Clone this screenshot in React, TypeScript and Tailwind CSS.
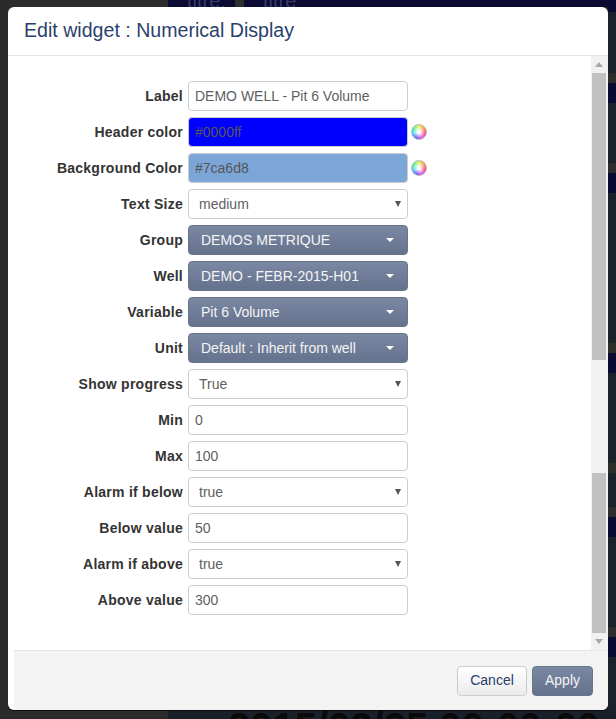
const segments: [string, string][] = [
  ['h-[5px]', 'bg-[#0a0a32]'],
  ['h-[61px]', 'bg-[#1c222a]'],
  ['h-[10px]', 'bg-[#2e2e2c]'],
  ['h-[20px]', 'bg-[#0a0a32]'],
  ['h-[60px]', 'bg-[#1c222a]'],
  ['h-[10px]', 'bg-[#2e2e2c]'],
  ['h-[20px]', 'bg-[#0a0a32]'],
  ['h-[150px]', 'bg-[#1c222a]'],
  ['h-[10px]', 'bg-[#2e2e2c]'],
  ['h-[20px]', 'bg-[#0a0a32]'],
  ['h-[90px]', 'bg-[#1c222a]'],
  ['h-[10px]', 'bg-[#2e2e2c]'],
  ['h-[34px]', 'bg-[#1c222a]'],
  ['h-[10px]', 'bg-[#2e2e2c]'],
  ['h-[20px]', 'bg-[#0a0a32]'],
  ['h-[90px]', 'bg-[#1c222a]'],
  ['h-[10px]', 'bg-[#2e2e2c]'],
  ['h-[20px]', 'bg-[#0a0a32]'],
  ['h-[53px]', 'bg-[#1c222a]'],
]

function Row({ label, children }: { label: string; children: React.ReactNode }) {
  return (
    <div className="flex h-[30px] items-center">
      <label className="w-[175px] pt-px text-right text-[14px] font-bold tracking-[0.25px] text-[#333]">{label}</label>
      <div className="ml-[5px] flex items-center">{children}</div>
    </div>
  )
}

function TextField({ value }: { value: string }) {
  return (
    <input
      readOnly
      value={value}
      className="h-[30px] w-[220px] rounded border border-[#ccc] bg-white px-[6px] text-[14px] text-[#5f5f5f] outline-none"
    />
  )
}

function ColorField({ value, bg }: { value: string; bg: string }) {
  return (
    <>
      <input
        readOnly
        value={value}
        className={`h-[30px] w-[220px] rounded border border-[#ccc] px-[6px] text-[14px] text-[#555] outline-none ${bg}`}
      />
      <span className="ml-[3px] h-[16px] w-[16px] rounded-full border border-[#bbb] bg-[radial-gradient(circle,#fff_12%,#ffffff00_72%),conic-gradient(#d8f040,#ff8a30,#ff3070,#e040f0,#5050ff,#30d0f0,#40f080,#d8f040)]" />
    </>
  )
}

function NativeSelect({ value }: { value: string }) {
  return (
    <div className="relative">
      <select
        defaultValue={value}
        className="block h-[30px] w-[220px] appearance-none rounded border border-[#ccc] bg-white pl-[10px] text-[14px] text-[#5f5f5f] outline-none"
      >
        <option>{value}</option>
      </select>
      <span className="absolute right-[7px] top-[12px] h-0 w-0 border-x-[3.5px] border-t-[6px] border-x-transparent border-t-[#555]" />
    </div>
  )
}

function DropButton({ value }: { value: string }) {
  return (
    <button className="flex h-[30px] w-[220px] items-center justify-between rounded border border-[#68758f] bg-gradient-to-b from-[#7b88a4] to-[#65728e] pl-3 pr-[13px] text-[14px] text-[#f4f4f4]">
      <span>{value}</span>
      <span className="h-0 w-0 border-x-4 border-t-4 border-x-transparent border-t-white" />
    </button>
  )
}

export default function App() {
  return (
    <div className="relative flex h-[719px] w-[616px] overflow-hidden bg-[#2b2b2b] font-['Liberation_Sans',Arial,sans-serif]">
      <div className="w-[168px] shrink-0" />
      <div className="flex flex-1 flex-col bg-[#18202a]">
        <div className="flex h-[7px] overflow-hidden bg-[#0a0a32] text-[20px] leading-[2px] text-[#3a3a66]">
          <div className="w-[67px] pl-[19px]">titre:</div>
          <div className="w-[9px] bg-[#2e2e2c]" />
          <div className="pl-[19px]">titre</div>
        </div>
        <div className="flex h-[703px] justify-end">
          <div className="flex w-[8px] flex-col">
            {segments.map(([h, c], i) => (
              <div key={i} className={`${h} ${c}`} />
            ))}
          </div>
        </div>
        <div className="h-[9px] overflow-hidden whitespace-nowrap pl-[60px] text-[40px] font-bold leading-[34px] text-[#0a0a0a]">
          2015/02/25 00:00:00
        </div>
      </div>

      <div className="absolute left-2 top-[7px] flex h-[703px] w-[600px] flex-col overflow-hidden rounded-md bg-white shadow-[0_1px_0_#0a0a0a]">
        <div className="flex h-[49px] shrink-0 items-center border-b border-[#e5e5e5] pl-4 text-[19.6px] text-[#2a3f6c]">
          Edit widget : Numerical Display
        </div>
        <div className="flex min-h-0 flex-1">
          <div className="flex flex-1 flex-col gap-[6px] pt-[25px]">
            <Row label="Label"><TextField value="DEMO WELL - Pit 6 Volume" /></Row>
            <Row label="Header color"><ColorField value="#0000ff" bg="bg-[#0000ff]" /></Row>
            <Row label="Background Color"><ColorField value="#7ca6d8" bg="bg-[#7ca6d8]" /></Row>
            <Row label="Text Size"><NativeSelect value="medium" /></Row>
            <Row label="Group"><DropButton value="DEMOS METRIQUE" /></Row>
            <Row label="Well"><DropButton value="DEMO - FEBR-2015-H01" /></Row>
            <Row label="Variable"><DropButton value="Pit 6 Volume" /></Row>
            <Row label="Unit"><DropButton value="Default : Inherit from well" /></Row>
            <Row label="Show progress"><NativeSelect value="True" /></Row>
            <Row label="Min"><TextField value="0" /></Row>
            <Row label="Max"><TextField value="100" /></Row>
            <Row label="Alarm if below"><NativeSelect value="true" /></Row>
            <Row label="Below value"><TextField value="50" /></Row>
            <Row label="Alarm if above"><NativeSelect value="true" /></Row>
            <Row label="Above value"><TextField value="300" /></Row>
          </div>
          <div className="flex w-[17px] flex-col items-center bg-[#f1f1f1] pr-[2px] pl-px">
            <div className="flex h-[17px] w-full shrink-0 items-center justify-center">
              <span className="h-0 w-0 border-x-[4px] border-b-[5px] border-x-transparent border-b-[#a8a8a8]" />
            </div>
            <div className="h-[287px] w-full bg-[#c1c1c1]" />
            <div className="h-[113px] w-full" />
            <div className="h-[160px] w-full bg-[#c1c1c1]" />
            <div className="flex h-[17px] w-full shrink-0 items-center justify-center">
              <span className="h-0 w-0 border-x-[4px] border-t-[5px] border-x-transparent border-t-[#a8a8a8]" />
            </div>
          </div>
        </div>
        <div className="ml-[6px] flex h-[60px] shrink-0 items-center justify-end gap-[5px] border-t border-[#e5e5e5] bg-[#f3f3f3] pr-[15px]">
          <button className="h-[30px] w-[70px] rounded border border-[#ccc] bg-gradient-to-b from-white to-[#ebebeb] text-[14px] text-[#2a3f6c]">
            Cancel
          </button>
          <button className="h-[30px] w-[61px] rounded border border-[#68758f] bg-gradient-to-b from-[#7b88a4] to-[#65728e] text-[14px] text-[#f4f4f4]">
            Apply
          </button>
        </div>
      </div>
    </div>
  )
}
